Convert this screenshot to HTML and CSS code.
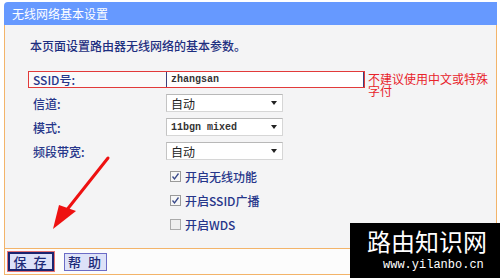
FILE: index.html
```html
<!DOCTYPE html>
<html lang="zh">
<head>
<meta charset="utf-8">
<title>无线网络基本设置</title>
<link rel="stylesheet" href="styles.css">
</head>
<body>
<div class="panel">
  <div class="title">无线网络基本设置</div>
  <div class="content">
    <p class="desc">本页面设置路由器无线网络的基本参数。</p>
    <div class="ssid-row">
      <div class="ssid-box">
        <span class="label">SSID号:</span>
        <span class="input mono">zhangsan</span>
      </div>
      <span class="hint">不建议使用中文或特殊字付</span>
    </div>
    <div class="rows">
      <div class="row"><span class="label">信道:</span><span class="select"><span>自动</span><span class="caret"></span></span></div>
      <div class="row"><span class="label">模式:</span><span class="select"><span class="mono">11bgn mixed</span><span class="caret"></span></span></div>
      <div class="row"><span class="label">频段带宽:</span><span class="select"><span>自动</span><span class="caret"></span></span></div>
    </div>
    <div class="checks">
      <div class="check"><svg class="cb" width="11" height="11" viewBox="0 0 11 11"><rect x="0.5" y="0.5" width="10" height="10" fill="#f7f7f7" stroke="#9a9a9a"/><path d="M2.5 5.5 L4.5 8 L8.5 2.5" fill="none" stroke="#3a4a8a" stroke-width="1.3"/></svg><span>开启无线功能</span></div>
      <div class="check"><svg class="cb" width="11" height="11" viewBox="0 0 11 11"><rect x="0.5" y="0.5" width="10" height="10" fill="#f7f7f7" stroke="#9a9a9a"/><path d="M2.5 5.5 L4.5 8 L8.5 2.5" fill="none" stroke="#3a4a8a" stroke-width="1.3"/></svg><span>开启SSID广播</span></div>
      <div class="check"><svg class="cb" width="11" height="11" viewBox="0 0 11 11"><rect x="0.5" y="0.5" width="10" height="10" fill="#eeeeee" stroke="#aaaaaa"/></svg><span>开启WDS</span></div>
    </div>
  </div>
  <div class="actions">
    <span class="btn btn-save">保 存</span>
    <span class="btn btn-help">帮 助</span>
  </div>
</div>
<svg class="arrow" width="500" height="278" viewBox="0 0 500 278">
  <line x1="108" y1="158" x2="62" y2="216" stroke="#ee1111" stroke-width="3" stroke-linecap="round"/>
  <polygon points="53,229 59,205 76,211" fill="#ee1111"/>
</svg>
<div class="watermark">
  <div class="wm-title">路由知识网</div>
  <div class="wm-url">www.yilanbo.cn</div>
</div>
</body>
</html>
```
FILE: styles.css
```css
html, body {
  margin: 0;
  padding: 0;
  background: #ffffff;
}
body {
  font-family: "Noto Sans CJK SC", "Liberation Sans", sans-serif;
  font-size: 12px;
  color: #26368a;
  width: 500px;
  height: 278px;
  overflow: hidden;
  position: relative;
}
.panel {
  margin: 2px 3px 0 4px;
}
.title {
  height: 23px;
  line-height: 23px;
  background: #6699ff;
  color: #ffffff;
  border-radius: 4px 0 0 0;
  padding-left: 8px;
  font-size: 12px;
}
.content {
  background: #f4f4f5;
  border-left: 1px solid #f3b46a;
  border-right: 1px solid #f3b46a;
  border-bottom: 1px solid #f3b46a;
  height: 223px;
  padding-left: 23px;
  overflow: hidden;
}
.desc {
  margin: 13px 0 0 2px;
  line-height: 16px;
  color: #1e2f80;
  font-weight: 500;
}
.ssid-row {
  display: flex;
  align-items: flex-start;
  height: 17px;
  margin-top: 17px;
}
.ssid-box {
  display: flex;
  width: 335px;
  height: 15px;
  border: 1px solid #e23a3a;
  background: #fafafa;
}
.label {
  color: #26368a;
  line-height: 15px;
  font-weight: 500;
}
.ssid-box .label {
  width: 133px;
  padding-left: 4px;
}
.input {
  flex: 1;
  border-left: 1px solid #3b3f7a;
  border-right: 1px solid #3b3f7a;
  background: #ffffff;
  padding-left: 4px;
  line-height: 15px;
  color: #222;
}
.mono {
  font-family: "Liberation Mono", "DejaVu Sans Mono", monospace;
  font-size: 10px;
  font-weight: bold;
  color: #333;
}
.hint {
  color: #e8232b;
  width: 122px;
  margin-left: 3px;
  line-height: 12px;
  font-size: 12px;
  margin-top: 2px;
}
.rows {
  display: flex;
  flex-direction: column;
  gap: 6px;
  margin-top: 6px;
}
.row {
  display: grid;
  grid-template-columns: 138px 117px;
  align-items: center;
  height: 18px;
}
.row .label {
  padding-left: 5px;
}
.select {
  display: flex;
  align-items: center;
  justify-content: space-between;
  height: 18px;
  box-sizing: border-box;
  background: #ffffff;
  border: 1px solid #d6d6d6;
  border-top-color: #b8b8b8;
  border-left-color: #c4c4c4;
  padding: 0 5px 0 4px;
  color: #222;
  font-size: 12px;
}
.caret {
  width: 0;
  height: 0;
  border-left: 3.5px solid transparent;
  border-right: 3.5px solid transparent;
  border-top: 4px solid #222;
}
.checks {
  display: flex;
  flex-direction: column;
  gap: 12px;
  margin-top: 10px;
  padding-left: 142px;
}
.check {
  display: flex;
  align-items: center;
  gap: 4px;
  height: 12px;
  color: #26368a;
  font-weight: 500;
}
.cb {
  flex: none;
}
.actions {
  display: flex;
  align-items: center;
  gap: 10px;
  height: 25px;
  padding-left: 3px;
  border-left: 1px solid #f3b46a;
  border-bottom: 1px solid #f3b46a;
  background: #fcfcfc;
}
.btn {
  display: flex;
  align-items: center;
  justify-content: center;
  box-sizing: border-box;
  background: #dde2f8;
  color: #1c2a78;
  font-size: 13px;
  letter-spacing: 2px;
  font-weight: 500;
}
.btn-save {
  width: 46px;
  height: 19px;
  border: 2px solid #1a2470;
  outline: 1px solid #e47272;
}
.btn-help {
  width: 43px;
  height: 18px;
  border: 1px solid #6b6bc6;
}
.arrow {
  position: absolute;
  left: 0;
  top: 0;
  pointer-events: none;
}
.watermark {
  position: absolute;
  left: 350px;
  top: 223px;
  width: 150px;
  height: 55px;
  background: #000000;
  color: #ffffff;
  box-sizing: border-box;
  padding-left: 17px;
}
.wm-title {
  font-size: 24px;
  line-height: 28px;
  margin-top: 4px;
}
.wm-url {
  font-family: "Liberation Mono", "DejaVu Sans Mono", monospace;
  font-size: 12px;
  line-height: 14px;
  margin-left: 16px;
  margin-top: 3px;
}
```
